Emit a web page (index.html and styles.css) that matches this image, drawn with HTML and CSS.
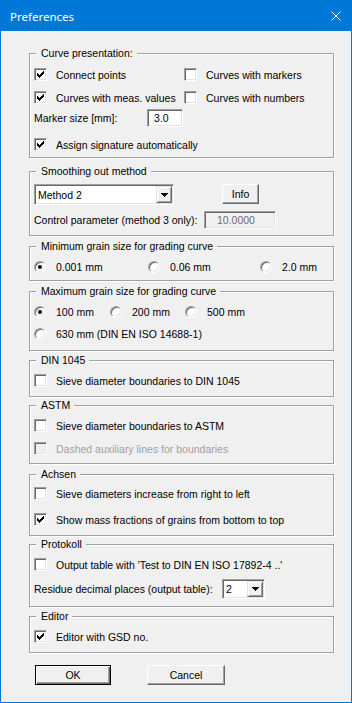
FILE: index.html
```html
<!DOCTYPE html>
<html lang="en">
<head>
    <meta charset="UTF-8">
    <title>Preferences</title>
    <link rel="stylesheet" href="styles.css">
</head>
<body>
    <div class="window">
        <div class="titlebar">
            <span class="title">Preferences</span>
            <svg class="close" width="10" height="10" viewBox="0 0 10 10"><path d="M0.5 0.5L9.5 9.5M9.5 0.5L0.5 9.5" stroke="#fff" stroke-width="1"/></svg>
        </div>

        <div class="content">
            <fieldset class="grp grp-curve">
                <legend>Curve presentation:</legend>
                <div class="row cols-curve">
                    <label class="opt"><span class="check"><svg width="9" height="9" viewBox="0 0 9 9" shape-rendering="crispEdges"><path d="M1 3H2V4H3V5H4V4H5V3H6V2H7V1H8V4H7V5H6V6H5V7H4V8H3V7H2V6H1Z"/></svg></span>Connect points</label>
                    <label class="opt"><span class="check"></span>Curves with markers</label>
                </div>
                <div class="row cols-curve">
                    <label class="opt"><span class="check"><svg width="9" height="9" viewBox="0 0 9 9" shape-rendering="crispEdges"><path d="M1 3H2V4H3V5H4V4H5V3H6V2H7V1H8V4H7V5H6V6H5V7H4V8H3V7H2V6H1Z"/></svg></span>Curves with meas. values</label>
                    <label class="opt"><span class="check"></span>Curves with numbers</label>
                </div>
                <div class="row row-field cols-marker">
                    <span>Marker size [mm]:</span>
                    <span class="field">3.0</span>
                </div>
                <div class="row row-sig">
                    <label class="opt"><span class="check"><svg width="9" height="9" viewBox="0 0 9 9" shape-rendering="crispEdges"><path d="M1 3H2V4H3V5H4V4H5V3H6V2H7V1H8V4H7V5H6V6H5V7H4V8H3V7H2V6H1Z"/></svg></span>Assign signature automatically</label>
                </div>
            </fieldset>

            <fieldset class="grp grp-smooth">
                <legend>Smoothing out method</legend>
                <div class="row row-combo cols-smooth">
                    <div class="combo combo-method">
                        <span class="combo-text">Method 2</span>
                        <span class="combo-btn"><svg width="7" height="4" viewBox="0 0 7 4" shape-rendering="crispEdges"><path d="M0 0H7V1H6V2H5V3H4V4H3V3H2V2H1V1H0Z"/></svg></span>
                    </div>
                    <button class="btn btn-info">Info</button>
                </div>
                <div class="row row-field cols-smooth">
                    <span>Control parameter (method 3 only):</span>
                    <span class="field field-off">10.0000</span>
                </div>
            </fieldset>

            <fieldset class="grp grp-min">
                <legend>Minimum grain size for grading curve</legend>
                <div class="row cols-min">
                    <label class="opt"><span class="radio on"></span>0.001 mm</label>
                    <label class="opt"><span class="radio"></span>0.06 mm</label>
                    <label class="opt"><span class="radio"></span>2.0 mm</label>
                </div>
            </fieldset>

            <fieldset class="grp grp-max">
                <legend>Maximum grain size for grading curve</legend>
                <div class="row cols-max">
                    <label class="opt"><span class="radio on"></span>100 mm</label>
                    <label class="opt"><span class="radio"></span>200 mm</label>
                    <label class="opt"><span class="radio"></span>500 mm</label>
                </div>
                <div class="row">
                    <label class="opt"><span class="radio"></span>630 mm (DIN EN ISO 14688-1)</label>
                </div>
            </fieldset>

            <fieldset class="grp grp-din">
                <legend>DIN 1045</legend>
                <div class="row">
                    <label class="opt"><span class="check"></span>Sieve diameter boundaries to DIN 1045</label>
                </div>
            </fieldset>

            <fieldset class="grp grp-astm">
                <legend>ASTM</legend>
                <div class="row">
                    <label class="opt"><span class="check"></span>Sieve diameter boundaries to ASTM</label>
                </div>
                <div class="row">
                    <label class="opt disabled"><span class="check"></span>Dashed auxiliary lines for boundaries</label>
                </div>
            </fieldset>

            <fieldset class="grp grp-axes">
                <legend>Achsen</legend>
                <div class="row">
                    <label class="opt"><span class="check"></span>Sieve diameters increase from right to left</label>
                </div>
                <div class="row">
                    <label class="opt"><span class="check"><svg width="9" height="9" viewBox="0 0 9 9" shape-rendering="crispEdges"><path d="M1 3H2V4H3V5H4V4H5V3H6V2H7V1H8V4H7V5H6V6H5V7H4V8H3V7H2V6H1Z"/></svg></span>Show mass fractions of grains from bottom to top</label>
                </div>
            </fieldset>

            <fieldset class="grp grp-report">
                <legend>Protokoll</legend>
                <div class="row">
                    <label class="opt"><span class="check"></span>Output table with 'Test to DIN EN ISO 17892-4 ..'</label>
                </div>
                <div class="row row-small-combo cols-report">
                    <span>Residue decimal places (output table):</span>
                    <div class="combo combo-places">
                        <span class="combo-text">2</span>
                        <span class="combo-btn"><svg width="7" height="4" viewBox="0 0 7 4" shape-rendering="crispEdges"><path d="M0 0H7V1H6V2H5V3H4V4H3V3H2V2H1V1H0Z"/></svg></span>
                    </div>
                </div>
            </fieldset>

            <fieldset class="grp grp-editor">
                <legend>Editor</legend>
                <div class="row">
                    <label class="opt"><span class="check"><svg width="9" height="9" viewBox="0 0 9 9" shape-rendering="crispEdges"><path d="M1 3H2V4H3V5H4V4H5V3H6V2H7V1H8V4H7V5H6V6H5V7H4V8H3V7H2V6H1Z"/></svg></span>Editor with GSD no.</label>
                </div>
            </fieldset>

            <div class="actions">
                <button class="btn btn-default btn-ok">OK</button>
                <button class="btn btn-cancel">Cancel</button>
            </div>
        </div>
    </div>
</body>
</html>
```

FILE: styles.css
```css
* {
    box-sizing: border-box;
}

body {
    margin: 0;
    font-family: "Liberation Sans", Arial, sans-serif;
    font-size: 10.5px;
    color: #000;
}

.window {
    width: 352px;
    height: 703px;
    border: 1px solid #0078d7;
    background: #f0f0f0;
    display: flex;
    flex-direction: column;
}

.titlebar {
    flex: none;
    height: 30px;
    background: #0078d7;
    color: #fff;
    display: flex;
    align-items: center;
    justify-content: space-between;
    padding: 0 10px 0 9px;
    font-family: "Noto Sans", sans-serif;
    font-size: 11.5px;
}

.close {
    display: block;
}

.content {
    padding: 16px 17px 0 28px;
}

/* group boxes */
.grp {
    margin: 3px 0 0;
    padding: 5px 4px 7px;
    min-width: 0;
    border: 1px solid #a0a0a0;
    box-shadow: inset 1px 1px #fff, 1px 1px #fff;
}

.grp legend {
    margin-left: 2px;
    padding: 0 4px 0 5px;
    line-height: 13px;
    background: #f0f0f0;
}

.row {
    display: flex;
    align-items: center;
    height: 17px;
    margin-top: 6px;
}

legend + .row {
    margin-top: 0;
}

.row-field {
    height: 18px;
}

.row-combo {
    height: 21px;
    align-items: flex-start;
}

.row-small-combo {
    height: 20px;
}

.grp-curve {
    margin-top: 0;
    padding-top: 6px;
    padding-bottom: 4px;
}

.grp-curve .row-field {
    margin-top: 3px;
}

.grp-curve .row-sig {
    margin-top: 9px;
}

.grp-smooth {
    margin-top: 7px;
    padding-top: 6px;
    padding-bottom: 6px;
}

.grp-min {
    margin-top: 4px;
    padding-bottom: 5px;
}

.grp-max {
    margin-top: 4px;
    padding-bottom: 8px;
}

.grp-max .row + .row {
    margin-top: 5px;
}

.grp-astm {
    margin-top: 2px;
    padding-bottom: 6px;
}

.grp-axes {
    margin-top: 4px;
    padding-top: 4px;
}

.grp-axes .row + .row {
    margin-top: 9px;
}

.grp-report {
    margin-top: 2px;
}

/* column layouts */
.cols-curve,
.cols-marker,
.cols-smooth,
.cols-min,
.cols-max,
.cols-report {
    display: grid;
}

.cols-curve { grid-template-columns: 150px auto; }
.cols-marker { grid-template-columns: 113px auto; }
.cols-smooth { grid-template-columns: 170px auto; }
.cols-min { grid-template-columns: 114px 112px auto; }
.cols-max { grid-template-columns: 76px 75px auto; }
.cols-report { grid-template-columns: 188px auto; }

.cols-smooth.row-combo {
    grid-template-columns: 188px auto;
}

/* check boxes and radios */
.opt {
    display: flex;
    align-items: center;
    gap: 9px;
    white-space: nowrap;
}

.opt.disabled {
    color: #a0a0a0;
}

.check {
    flex: none;
    width: 13px;
    height: 13px;
    padding: 1px;
    background: #fff;
    border: 1px solid;
    border-color: #a0a0a0 #fff #fff #a0a0a0;
    box-shadow: inset 1px 1px #696969, inset -1px -1px #e3e3e3;
}

.check svg {
    display: block;
}

.disabled .check {
    background: #f0f0f0;
}

.radio {
    flex: none;
    width: 12px;
    height: 12px;
    margin-right: 1px;
    border-radius: 50%;
    background: #fff;
    border: 1px solid;
    border-color: #a0a0a0 #fff #fff #a0a0a0;
    box-shadow: inset 1px 1px #696969, inset -1px -1px #e3e3e3;
    display: flex;
    align-items: center;
    justify-content: center;
}

.radio.on::after {
    content: "";
    width: 4px;
    height: 4px;
    border-radius: 50%;
    background: #000;
}

/* edit fields */
.field {
    width: 36px;
    height: 18px;
    padding: 2px 0 0 6px;
    line-height: 13px;
    background: #fff;
    border: 1px solid;
    border-color: #a0a0a0 #fff #fff #a0a0a0;
    box-shadow: inset 1px 1px #696969, inset -1px -1px #e3e3e3;
}

.field-off {
    width: 72px;
    padding-left: 12px;
    background: #f0f0f0;
    color: #6d6d6d;
}

/* combo boxes */
.combo {
    display: flex;
    padding: 1px;
    background: #fff;
    border: 1px solid;
    border-color: #a0a0a0 #fff #fff #a0a0a0;
    box-shadow: inset 1px 1px #696969, inset -1px -1px #e3e3e3;
}

.combo-method {
    width: 140px;
    height: 21px;
}

.combo-places {
    width: 43px;
    height: 20px;
}

.combo-text {
    flex: 1;
    padding-left: 2px;
    display: flex;
    align-items: center;
}

.combo-btn {
    flex: none;
    width: 16px;
    background: #f0f0f0;
    border: 1px solid;
    border-color: #e3e3e3 #696969 #696969 #e3e3e3;
    box-shadow: inset 1px 1px #fff, inset -1px -1px #a0a0a0;
    display: flex;
    align-items: center;
    justify-content: center;
}

.combo-btn svg {
    display: block;
}

/* push buttons */
.btn {
    height: 20px;
    padding: 0;
    font: inherit;
    color: #000;
    background: #f0f0f0;
    border: 1px solid;
    border-color: #fff #696969 #696969 #fff;
    box-shadow: inset -1px -1px #a0a0a0;
}

.btn-default {
    border-color: #000;
    box-shadow: inset 1px 1px #fff, inset -1px -1px #696969, inset -2px -2px #a0a0a0;
}

.btn-info {
    width: 37px;
}

.actions {
    display: flex;
    gap: 36px;
    margin-top: 12px;
    padding-left: 6px;
}

.btn-ok {
    width: 76px;
}

.btn-cancel {
    width: 78px;
}
```
